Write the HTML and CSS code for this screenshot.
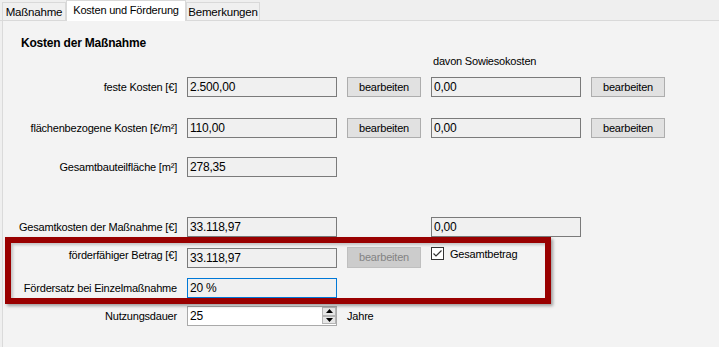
FILE: index.html
```html
<!DOCTYPE html>
<html lang="de">
<head>
	<meta charset="UTF-8">
	<title>Kosten und Förderung</title>
	<link rel="stylesheet" href="styles.css">
</head>
<body>
	<div class="tabs">
		<div class="tab">Maßnahme</div>
		<div class="tab active">Kosten und Förderung</div>
		<div class="tab">Bemerkungen</div>
	</div>
	<div class="page">
		<h2 class="title">Kosten der Maßnahme</h2>
		<div class="row head">
			<span class="col4">davon Sowiesokosten</span>
		</div>
		<div class="row r1">
			<span class="label">feste Kosten [€]</span>
			<div class="box">2.500,00</div>
			<div class="btn">bearbeiten</div>
			<div class="box">0,00</div>
			<div class="btn">bearbeiten</div>
		</div>
		<div class="row r2">
			<span class="label">flächenbezogene Kosten [€/m²]</span>
			<div class="box">110,00</div>
			<div class="btn">bearbeiten</div>
			<div class="box">0,00</div>
			<div class="btn">bearbeiten</div>
		</div>
		<div class="row r3">
			<span class="label">Gesamtbauteilfläche [m²]</span>
			<div class="box">278,35</div>
		</div>
		<div class="row r4">
			<span class="label">Gesamtkosten der Maßnahme [€]</span>
			<div class="box">33.118,97</div>
			<div></div>
			<div class="box">0,00</div>
		</div>
		<div class="row r5">
			<span class="label top">förderfähiger Betrag [€]</span>
			<div class="box">33.118,97</div>
			<div class="btn disabled">bearbeiten</div>
			<div class="check">
				<svg width="13" height="13" viewBox="0 0 13 13">
					<rect x="0.5" y="0.5" width="12" height="12" fill="#fff" stroke="#333"/>
					<polyline points="2.5,6.5 5,9 10.5,3.5" fill="none" stroke="#333" stroke-width="1.2"/>
				</svg>
				<span>Gesamtbetrag</span>
			</div>
		</div>
		<div class="row r6">
			<span class="label">Fördersatz bei Einzelmaßnahme</span>
			<div class="box focus">20 %</div>
		</div>
		<div class="row r7">
			<span class="label">Nutzungsdauer</span>
			<div class="box spin">
				<span>25</span>
				<div class="arrows">
					<div class="arrow">
						<svg width="7" height="4" viewBox="0 0 7 4"><polygon points="3.5,0 7,4 0,4" fill="#000"/></svg>
					</div>
					<div class="arrow">
						<svg width="7" height="4" viewBox="0 0 7 4"><polygon points="0,0 7,0 3.5,4" fill="#000"/></svg>
					</div>
				</div>
			</div>
			<span class="unit">Jahre</span>
		</div>
		<!-- Markierung über Zeile 5 und 6 -->
		<div class="mark"></div>
	</div>
</body>
</html>
```

FILE: styles.css
```css
* {
	margin: 0;
	padding: 0;
	box-sizing: border-box;
}
body {
	background: #efefef;
	font-family: "Liberation Sans", Arial, sans-serif;
	font-size: 11px;
	letter-spacing: -0.2px;
	color: #000;
}
.tabs {
	display: flex;
	align-items: flex-end;
	height: 21px;
	padding-left: 2px;
	border-bottom: 1px solid #d9d9d9;
}
.tab {
	height: 18px;
	line-height: 19px;
	text-align: center;
	white-space: nowrap;
	font-size: 11.5px;
	background: #f0f0f0;
	border: 1px solid #d9d9d9;
	border-bottom: none;
}
.tab:first-child {
	width: 64px;
}
.tab:last-child {
	width: 74px;
}
.tab.active {
	width: 120px;
	height: 21px;
	line-height: 19px;
	margin-bottom: -1px;
	font-size: 11px;
	background: #fff;
}
.page {
	position: relative;
	min-height: 326px;
	margin-left: 2px;
	padding-top: 15px;
	background: #f3f3f3;
	border-left: 1px solid #dadada;
}
.title {
	margin-left: 18px;
	font-size: 12px;
	line-height: 14px;
	font-weight: bold;
}
.row {
	display: grid;
	grid-template-columns: 174px 150px 74px 150px 74px;
	column-gap: 10px;
	align-items: center;
	height: 20px;
}
.row.head {
	height: 14px;
	margin-top: 4px;
	line-height: 14px;
}
.col4 {
	grid-column: 4;
	padding-left: 2px;
}
.r1 { margin-top: 9px; }
.r2 { margin-top: 21px; }
.r3 { margin-top: 19px; }
.r4 { margin-top: 40px; }
.r5 { margin-top: 10px; }
.r6 { margin-top: 11px; }
.r7 { margin-top: 8px; }

.label {
	text-align: right;
	line-height: 14px;
	white-space: nowrap;
}
.label.top {
	align-self: start;
	margin-top: 1px;
}
.box {
	height: 20px;
	line-height: 18px;
	padding: 0 2px;
	background: #f0f0f0;
	border: 1px solid #7a7a7a;
	font-size: 12px;
}
.box.focus {
	border-color: #0078d7;
}
.btn {
	height: 20px;
	line-height: 18px;
	text-align: center;
	background: #e1e1e1;
	border: 1px solid #adadad;
}
.btn.disabled {
	height: 21px;
	background: #cccccc;
	border-color: #bfbfbf;
	color: #838383;
}
.check {
	display: flex;
	align-items: center;
	gap: 6px;
	align-self: start;
	height: 13px;
}
.check svg {
	display: block;
}
.spin {
	display: flex;
	justify-content: space-between;
	background: #fff;
	border-color: #a9a9a9;
	padding-right: 0;
}
.arrows {
	display: flex;
	flex-direction: column;
	width: 14px;
	padding: 0 0 1px;
}
.arrow {
	display: flex;
	align-items: center;
	justify-content: center;
	height: 9px;
	background: #e6e6e6;
	border: 1px solid #b5b5b5;
}
.arrow svg {
	display: block;
}
.mark {
	position: absolute;
	left: 2px;
	top: 216px;
	width: 546px;
	height: 67px;
	border: 6px solid #990000;
	box-shadow: 2px 2px 3px rgba(0, 0, 0, 0.35), inset 2px 2px 3px rgba(0, 0, 0, 0.2);
}
```
